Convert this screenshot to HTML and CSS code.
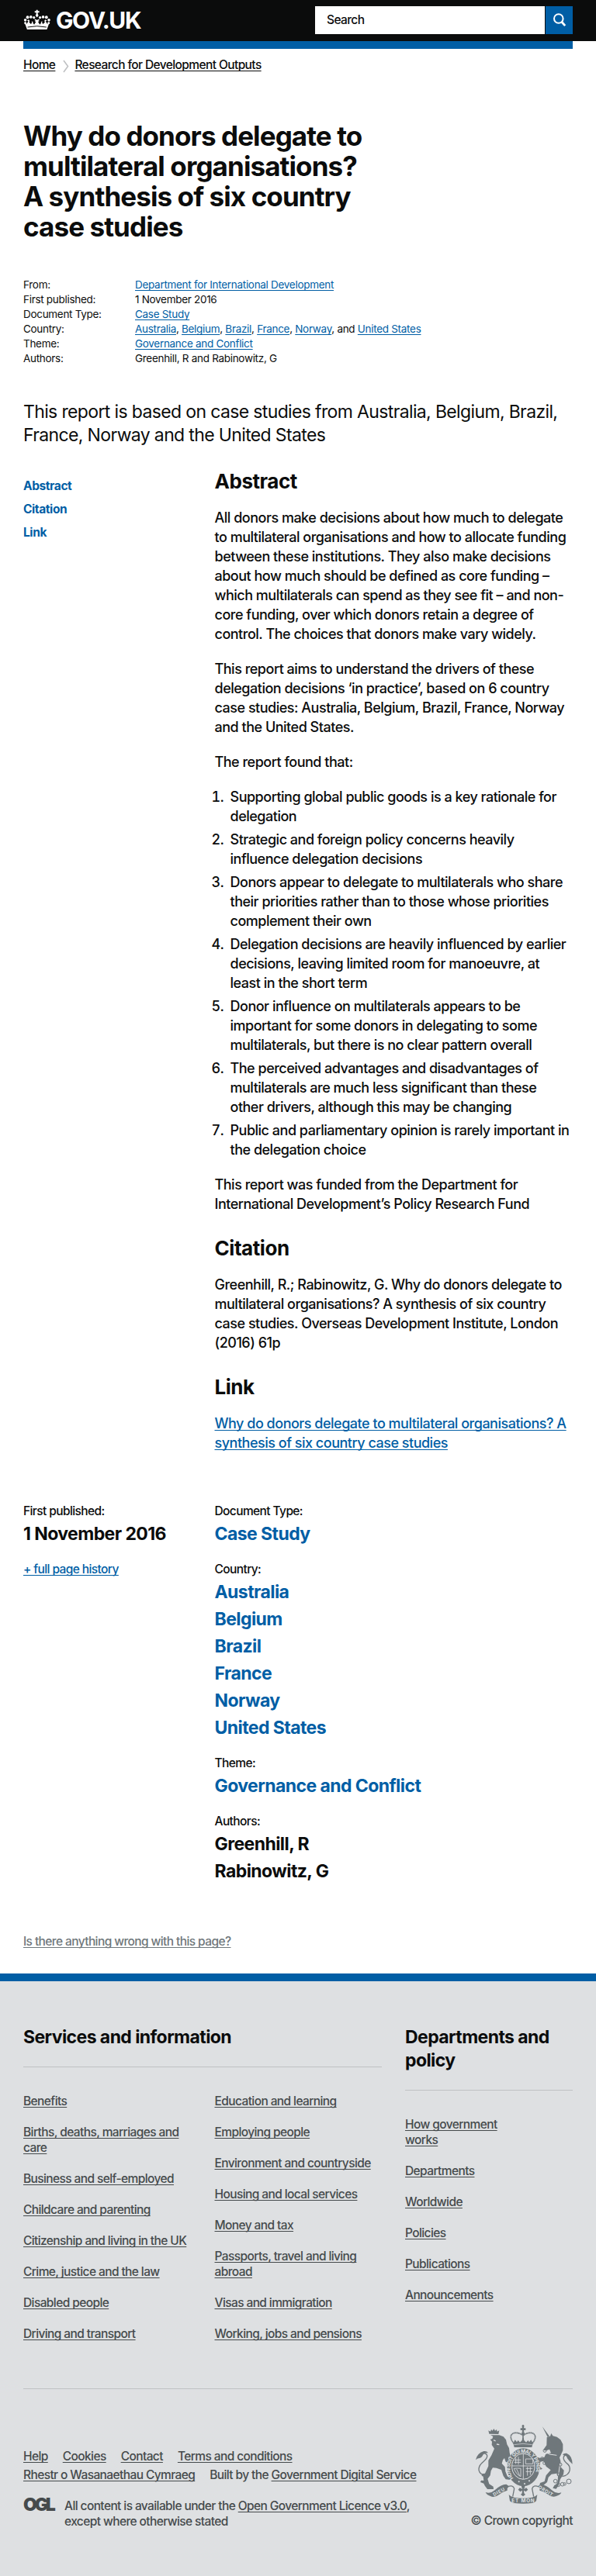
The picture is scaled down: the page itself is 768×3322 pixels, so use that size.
FILE: index.html
```html
<!DOCTYPE html>
<html lang="en">
<head>
<meta charset="utf-8">
<title>Why do donors delegate to multilateral organisations? - GOV.UK</title>
<link rel="stylesheet" href="styles.css">
</head>
<body>
<header class="header">
  <a class="logo" href="#">
    <svg class="crown" viewBox="30 35 110 80" fill="#fff">
      <path d="M81 36h6v5h6v6h-6v5l3 6-6 8-6-8 3-6v-5h-6v-6h6z"/>
      <circle cx="72" cy="66" r="5"/><circle cx="60" cy="64" r="5.5"/><circle cx="47" cy="65" r="6"/><circle cx="38" cy="76" r="5.5"/><circle cx="38" cy="88" r="4.5"/>
      <circle cx="96" cy="66" r="5"/><circle cx="108" cy="64" r="5.5"/><circle cx="121" cy="65" r="6"/><circle cx="131" cy="76" r="5.5"/><circle cx="130" cy="88" r="4.5"/>
      <path d="M37 91l7-1 6-9-5-3 6-4 4 5-2 6 7 7 4-5-1-6 5 2 0 5 5 6 7-11-5-2 4-4h-4v-5l9 4 9-4v5h-4l4 4-5 2 7 11 5-6 0-5 5-2-1 6 4 5 7-7-2-6 4-5 6 4-5 3 6 9 7 1-8 22H45z"/>
      <path d="M47 104q37-8 74 0" fill="none" stroke="#0b0c0c" stroke-width="3"/>
    </svg>
    <span class="wordmark">GOV.UK</span>
  </a>
  <form class="search">
    <span class="search-field">Search</span>
    <span class="search-button">
      <svg width="18" height="18" viewBox="0 0 18 18" fill="none" stroke="#fff"><circle cx="7.8" cy="7" r="5.8" stroke-width="2"/><path d="M12 11.5l4.2 4.6" stroke-width="2.8"/></svg>
    </span>
  </form>
</header>
<div class="header-bar"></div>
<main class="wrapper">
  <nav class="breadcrumbs small">
    <a href="#">Home</a>
    <svg width="8" height="17" viewBox="0 0 8 17" fill="none" stroke="#bfc1c3" stroke-width="1.6"><path d="M1 1l5.5 7.5L1 16"/></svg>
    <a href="#">Research for Development Outputs</a>
  </nav>
  <h1>Why do donors delegate to<br>multilateral organisations?<br>A synthesis of six country<br>case studies</h1>
  <dl class="meta">
    <dt>From:</dt><dd><a href="#">Department for International Development</a></dd>
    <dt>First published:</dt><dd>1 November 2016</dd>
    <dt>Document Type:</dt><dd><a href="#">Case Study</a></dd>
    <dt>Country:</dt><dd><a href="#">Australia</a>, <a href="#">Belgium</a>, <a href="#">Brazil</a>, <a href="#">France</a>, <a href="#">Norway</a>, and <a href="#">United States</a></dd>
    <dt>Theme:</dt><dd><a href="#">Governance and Conflict</a></dd>
    <dt>Authors:</dt><dd>Greenhill, R and Rabinowitz, G</dd>
  </dl>
  <p class="lede">This report is based on case studies from Australia, Belgium, Brazil,<br>France, Norway and the United States</p>
  <div class="columns">
    <nav class="contents small"><a href="#">Abstract</a><a href="#">Citation</a><a href="#">Link</a></nav>
    <article class="body">
      <h2>Abstract</h2>
      <p>All donors make decisions about how much to delegate<br>to multilateral organisations and how to allocate funding<br>between these institutions. They also make decisions<br>about how much should be defined as core funding –<br>which multilaterals can spend as they see fit – and non-<br>core funding, over which donors retain a degree of<br>control. The choices that donors make vary widely.</p>
      <p>This report aims to understand the drivers of these<br>delegation decisions ‘in practice’, based on 6 country<br>case studies: Australia, Belgium, Brazil, France, Norway<br>and the United States.</p>
      <p>The report found that:</p>
      <ol>
        <li>Supporting global public goods is a key rationale for<br>delegation</li>
        <li>Strategic and foreign policy concerns heavily<br>influence delegation decisions</li>
        <li>Donors appear to delegate to multilaterals who share<br>their priorities rather than to those whose priorities<br>complement their own</li>
        <li>Delegation decisions are heavily influenced by earlier<br>decisions, leaving limited room for manoeuvre, at<br>least in the short term</li>
        <li>Donor influence on multilaterals appears to be<br>important for some donors in delegating to some<br>multilaterals, but there is no clear pattern overall</li>
        <li>The perceived advantages and disadvantages of<br>multilaterals are much less significant than these<br>other drivers, although this may be changing</li>
        <li>Public and parliamentary opinion is rarely important in<br>the delegation choice</li>
      </ol>
      <p>This report was funded from the Department for<br>International Development’s Policy Research Fund</p>
      <h2>Citation</h2>
      <p>Greenhill, R.; Rabinowitz, G. Why do donors delegate to<br>multilateral organisations? A synthesis of six country<br>case studies. Overseas Development Institute, London<br>(2016) 61p</p>
      <h2>Link</h2>
      <p><a href="#">Why do donors delegate to multilateral organisations? A<br>synthesis of six country case studies</a></p>
    </article>
  </div>
  <div class="columns details">
    <div>
      <div class="fact"><span class="small">First published:</span><strong>1 November 2016</strong></div>
      <a class="history small" href="#">+ full page history</a>
    </div>
    <div>
      <div class="fact"><span class="small">Document Type:</span><a href="#">Case Study</a></div>
      <div class="fact"><span class="small">Country:</span><a href="#">Australia</a><a href="#">Belgium</a><a href="#">Brazil</a><a href="#">France</a><a href="#">Norway</a><a href="#">United States</a></div>
      <div class="fact"><span class="small">Theme:</span><a href="#">Governance and Conflict</a></div>
      <div class="fact"><span class="small">Authors:</span><strong>Greenhill, R</strong><strong>Rabinowitz, G</strong></div>
    </div>
  </div>
  <a class="report small" href="#">Is there anything wrong with this page?</a>
</main>
<footer class="footer small">
  <div class="footer-nav">
    <section class="services">
      <h3>Services and information</h3>
      <div class="link-columns">
        <ul><li><a href="#">Benefits</a></li><li><a href="#">Births, deaths, marriages and<br>care</a></li><li><a href="#">Business and self-employed</a></li><li><a href="#">Childcare and parenting</a></li><li><a href="#">Citizenship and living in the UK</a></li><li><a href="#">Crime, justice and the law</a></li><li><a href="#">Disabled people</a></li><li><a href="#">Driving and transport</a></li></ul>
        <ul><li><a href="#">Education and learning</a></li><li><a href="#">Employing people</a></li><li><a href="#">Environment and countryside</a></li><li><a href="#">Housing and local services</a></li><li><a href="#">Money and tax</a></li><li><a href="#">Passports, travel and living<br>abroad</a></li><li><a href="#">Visas and immigration</a></li><li><a href="#">Working, jobs and pensions</a></li></ul>
      </div>
    </section>
    <section class="departments">
      <h3>Departments and<br>policy</h3>
      <ul><li><a href="#">How government<br>works</a></li><li><a href="#">Departments</a></li><li><a href="#">Worldwide</a></li><li><a href="#">Policies</a></li><li><a href="#">Publications</a></li><li><a href="#">Announcements</a></li></ul>
    </section>
  </div>
  <div class="footer-meta">
    <div>
      <div class="meta-links"><a href="#">Help</a><a href="#">Cookies</a><a href="#">Contact</a><a href="#">Terms and conditions</a></div>
      <div class="meta-links"><a href="#">Rhestr o Wasanaethau Cymraeg</a><span>Built by the <a href="#">Government Digital Service</a></span></div>
      <div class="licence"><span class="ogl">OGL</span><span>All content is available under the <a href="#">Open Government Licence v3.0</a>,<br>except where otherwise stated</span></div>
    </div>
    <div class="copyright">
      <svg class="crest" viewBox="69 51 375 306" fill="#6f777b">
        <!-- lion -->
        <path d="M121 86l-3-13 8 4 3-8 5 5 5-8 5 8 6-5 2 8 8-4-3 14z"/>
        <path d="M126 91h34l16 6 10 12 4 18 8 14 2 18 4 14-8 3-1 22-10-4-5-14-6 7-4 14 12 13 2 18 8 19 14 3-3 10-18-2-9-13-8-24-19-7-14-1-7 12-3 18-10 13 6 20 16 10 1 10-24 0-9-12-5-10-13-5 3-7 10 1-2-16-6-3 1-7 12-2 13-28 0-22 12-20 11-26-10-14 1-13-7-8 8-3 3-9z"/>
        <path d="M138 110l8 4M150 126l10 2" stroke="#dee0e2" stroke-width="4"/>
        <path d="M100 246C70 234 80 208 98 194c18-14 24-34-4-33" fill="none" stroke="#6f777b" stroke-width="4"/>
        <path d="M69 187q4-25 31-34 12-2 17 7-16-1-20 8-5 11-13 12-8 0-15 7z"/>
        <!-- unicorn -->
        <path d="M326 57l28 38-7 3z"/>
        <path d="M344 99l13-4 4-11 6 10 16 4 14 11 9 17 0 24-8 18-5 10 4 13 0 23 13 13-2 16-12 18-6 23-10 15-13-3 6-11 11-6 3-23-4-17-21 3-12 12-5 19-15 13-14-2 2-8 17-6 6-23 18-21-18-14-9-21-13 3-3 18 11 9-7 3-12-8 0-26-12-3-7-11 12-1 18 5 15-3 6-13 20-4-6-14-12 5-9-1 0-6 10-14z"/>
        <path d="M324 145l30 20 28 4M318 172l-10-9M395 200l-6 44-12 24" stroke="#dee0e2" stroke-width="3" fill="none"/>
        <g fill="none" stroke="#6f777b" stroke-width="3"><circle cx="336" cy="151" r="6"/><circle cx="326" cy="183" r="7"/><circle cx="335" cy="199" r="6"/><circle cx="396" cy="205" r="6"/><circle cx="390" cy="243" r="6"/><circle cx="377" cy="269" r="7"/><circle cx="388" cy="283" r="7"/><circle cx="404" cy="281" r="7"/><circle cx="429" cy="270" r="9"/><circle cx="413" cy="280" r="5"/>
        <path d="M403 251c37-6 35-39 18-51-16-14-18-30 2-35" stroke-width="4"/></g>
        <path d="M443 203q-1-33-23-42-12-1-15 7 16 0 18 13 8 12 20 22z"/>
        <!-- crown -->
        <circle cx="252" cy="55" r="4"/><path d="M248 57h8l-1 7h7v8h-7l1 8h-8l1-8h-7v-8h7z"/>
        <circle cx="252" cy="85" r="6"/>
        <path d="M217 124C184 84 226 70 252 93c26-23 68-9 35 31M252 88v34" fill="none" stroke="#6f777b" stroke-width="5" stroke-dasharray="5 1"/>
        <path d="M214 122l7-13 7 9 5-7 7 8 8-8 2-11h4l2 11 8 8 7-8 5 7 7-9 7 13-4 16H218z"/>
        <path d="M217 128q35-8 70 0" fill="none" stroke="#dee0e2" stroke-width="2"/>
        <!-- shield and garter -->
        <ellipse cx="253" cy="215" rx="63" ry="73"/>
        <ellipse cx="253" cy="212" rx="44" ry="50" fill="none" stroke="#dee0e2" stroke-width="3"/>
        <path d="M209 210h88M253 163v98M218 187h26M218 196h26M224 178v24M234 175v30M263 220h26M263 232h25M269 214v34M280 214v31M262 183l28 0 0 19-28 0zM217 220q12-2 26 0v31q-18-8-26-31M227 222l12 26" fill="none" stroke="#dee0e2" stroke-width="2.5"/>
        <path id="garter" d="M215 258A51 59 0 1 1 292 256" fill="none"/>
        <text class="motto" font-size="19"><textPath href="#garter" textLength="232">HONI SOIT QUI MAL Y PENSE</textPath></text>
        <circle cx="236" cy="271" r="3" fill="#dee0e2"/><circle cx="258" cy="279" r="3" fill="#dee0e2"/><circle cx="276" cy="268" r="3" fill="#dee0e2"/>
        <!-- scroll -->
        <path d="M107 312q19 7 36-8 23-23 44-23l11 8q-8 6-7 16-18 5-30 15-20 15-35 7-15-5-19-15zM400 313q-18 7-35-8-24-23-45-24l-11 8q8 6 7 16 17 4 30 14 18 15 34 8 17-5 20-14z"/>
        <path d="M192 291q22-9 26 7l-6 31M313 291q-22-9-26 7l6 31" fill="none" stroke="#6f777b" stroke-width="4"/>
        <path d="M197 321q7 9 20 11 36 6 70 0 13-2 20-11l-4 25q-5 6-17 8-34 5-68 0-13-3-17-8z"/>
        <path d="M249 290l4-7 5 7-2 9 9-4 6 7-8 8-8-5 1 11 5 5-9 7-9-7 5-5 1-11-8 5-8-8 6-7 10 4zM246 285h13v10h-13z"/>
        <text class="motto" font-size="19" x="208" y="352" textLength="88">ET MON</text>
        <text class="motto" font-size="18" textLength="49" transform="translate(140 328) rotate(-29)">DIEU</text>
        <text class="motto" font-size="18" textLength="62" transform="translate(310 296) rotate(31)">DROIT</text>
      </svg>
      <span>© Crown copyright</span>
    </div>
  </div>
</footer>
</body>
</html>
```
FILE: styles.css
```css
* { box-sizing: border-box; }
body { margin: 0; background: #fff; color: #0b0c0c; font-family: Inter, "Liberation Sans", sans-serif; font-size: 18px; font-weight: 500; line-height: 25px; letter-spacing: -.49px; white-space: nowrap; }
h1, h2, h3, p, dl, dd, ol, ul { margin: 0; padding: 0; }
ul { list-style: none; }
a { color: #005ea5; text-underline-offset: 2px; text-decoration-thickness: 1px; text-decoration-skip-ink: none; }
.small { font-size: 15.5px; font-weight: 500; line-height: 20px; letter-spacing: -.6px; }

.header { display: flex; justify-content: space-between; height: 53px; padding: 8px 30px 0; background: #0b0c0c; }
.logo { display: flex; align-items: flex-start; gap: 6px; color: #fff; text-decoration: none; }
.crown { width: 36px; height: 27px; margin-top: 4px; }
.wordmark { font-size: 30px; font-weight: 700; line-height: 36px; letter-spacing: -1.4px; }
.search { display: flex; gap: 1px; width: 332px; height: 36px; }
.search-field { flex: 1; padding-left: 15px; background: #fff; font-size: 15.5px; line-height: 35px; letter-spacing: -.6px; }
.search-button { display: flex; align-items: center; justify-content: center; width: 35px; background: #005ea5; }
.header-bar { height: 10px; margin: 0 30px; background: #005ea5; }

.wrapper { height: 2482px; padding: 10px 30px 0; }
.breadcrumbs { display: flex; align-items: center; }
.breadcrumbs a { color: #0b0c0c; }
.breadcrumbs svg { margin: 4px 7px 0 10px; }
h1 { margin-top: 62px; font-size: 35px; font-weight: 700; line-height: 39px; letter-spacing: -.9px; }
.meta { display: grid; grid-template-columns: 144px 1fr; margin-top: 46px; font-size: 13.5px; font-weight: 400; line-height: 19.1px; letter-spacing: -.3px; }
.lede { margin-top: 43px; font-size: 23px; font-weight: 400; line-height: 30px; letter-spacing: -.64px; }
.columns { display: grid; grid-template-columns: 246.5px 1fr; }
.contents { display: flex; flex-direction: column; gap: 10px; padding-top: 41px; letter-spacing: -.4px; }
.contents a { font-weight: 700; text-decoration: none; }
.body h2 { margin: 30px 0 19px; font-size: 26px; font-weight: 700; line-height: 30px; letter-spacing: -.45px; }
.body p { margin-bottom: 20px; }
.body p:has(+ h2), .body p:last-child { margin-bottom: 0; }
.body ol { padding-left: 20px; margin-bottom: 20px; }
.body li { margin-bottom: 5px; }
.body li::marker { content: counter(list-item) ".\2002"; }
.details { margin-top: 66px; }
.fact { display: flex; flex-direction: column; margin-bottom: 18px; font-size: 23px; line-height: 35px; letter-spacing: -.57px; }
.fact .small { margin-bottom: 2px; }
.fact a { font-weight: 700; text-decoration: none; }
.fact strong { font-weight: 700; }
.history { display: block; }
.report { display: block; margin-top: 45px; color: #6f777b; }

.footer { height: 777px; padding: 57px 30px 0; border-top: 10px solid #005ea5; background: #dee0e2; color: #454a4c; }
.footer a { color: #454a4c; }
.footer-nav { display: grid; grid-template-columns: 462px 216px; gap: 30px; height: 469px; border-bottom: 1px solid #bfc1c3; }
h3 { padding-bottom: 23px; margin-bottom: 34px; border-bottom: 1px solid #bfc1c3; color: #0b0c0c; font-size: 23px; font-weight: 700; line-height: 30px; letter-spacing: -.58px; }
.link-columns { display: grid; grid-template-columns: 246.5px 1fr; }
.footer li { margin-bottom: 20px; }
.footer-meta { display: flex; justify-content: space-between; padding-top: 46px; }
.footer-meta > div:first-child { padding-top: 31px; }
.meta-links { display: flex; gap: 19px; height: 24px; }
.licence { display: flex; margin-top: 16px; }
.ogl { width: 53px; font-size: 23px; font-weight: 900; line-height: 17px; letter-spacing: -3.2px; }
.copyright { display: flex; flex-direction: column; align-items: flex-end; gap: 12px; }
.crest { display: block; width: 125px; height: 102px; }
.motto { fill: #dee0e2; font-weight: 700; letter-spacing: 0; }
```
